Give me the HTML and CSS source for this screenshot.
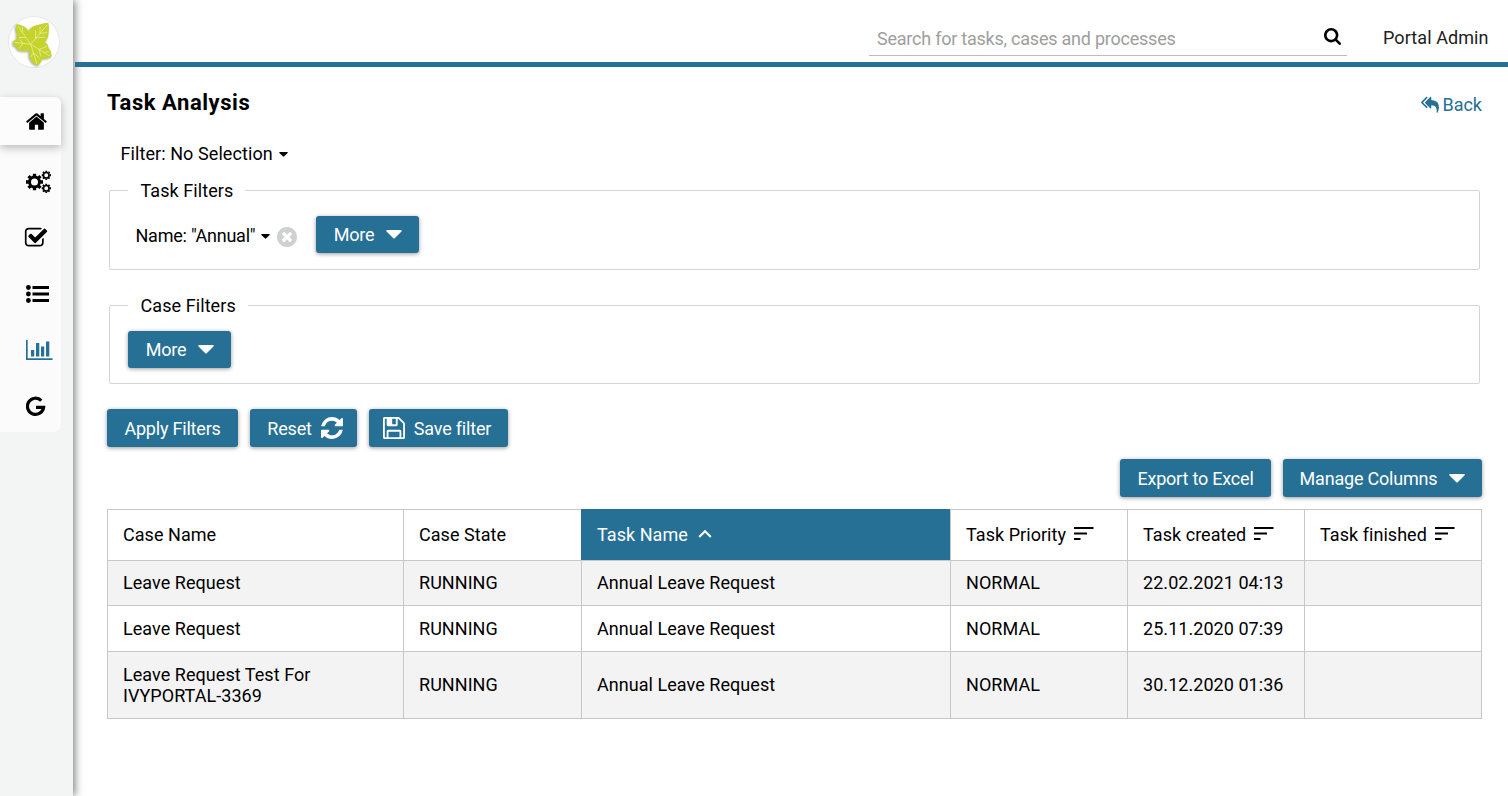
FILE: index.html
```html
<!DOCTYPE html>
<html lang="en">
<head>
<meta charset="utf-8">
<title>Task Analysis</title>
<link rel="stylesheet" href="styles.css">
</head>
<body>
<svg class="defs" width="0" height="0">
  <symbol id="caret" viewBox="0 0 16 9"><path d="M1.2 0h13.6q1 0 1 .8 0 .4-.4.8L8.7 8.2q-.7.6-1.4 0L.6 1.6Q.2 1.200.2.8.2 0 1.200 0z"/></symbol>
  <symbol id="sort" viewBox="0 0 20 14"><path d="M0 0h19.500v2H0zM0 5.500h13v2H0zM0 11h6.500v2H0z"/></symbol>
  <symbol id="gear" viewBox="-8 -8 16 16"><circle r="4.700" fill="none" stroke="currentColor" stroke-width="2.800"/><path stroke="currentColor" stroke-width="3.100" d="M0-8v2.500M0 5.500V8M-8 0h2.500M5.500 0H8M-5.600-5.600l1.700 1.700M5.600 5.600L3.900 3.900M-5.600 5.600l1.700-1.700M5.600-5.600L3.900-3.900"/></symbol>
</svg>
<aside class="sidebar">
  <div class="logo">
    <svg viewBox="0 0 52 52" width="52" height="52">
      <circle cx="26" cy="26" r="25.500" fill="#fff" stroke="#e6e8e8"/>
      <path class="leaf" fill="#c5d42d" d="M20.500 16Q22 11 28 9.500 33 8 40.300 6.800 41.500 11 40.700 16 40.500 22 37 26.500 40 27.500 40.700 32 44 36 43.500 41 38 43.500 34 42.500 33.500 47 29.500 49.500 24.500 48 22.500 43.500 20.500 41 21.500 34.500 18 35.500 14 35 9.500 35 8.500 31 5 30 5 26.500 5.500 24.500 9.500 22.500 8 20 9 17 7 13 8.500 8 13 8.500 16 10.500 20 12.500 20.500 16z"/>
      <g fill="none" stroke="#eaf0a8" stroke-width=".7">
        <path d="M22.700 28.300L39 9M27.500 22.500v-8M32 17.500V11M28 22l9-1M32 17.500l7-1M22.700 28.300L10 10M18 21.500h-7M14.500 17V11M22.700 28.300L7 26.500M15 27.500l-4 5M15 27.500l-3-4M22.700 28.300L42 40M31 33.500l8-3M31 33.500l2 7M36 36.500l5-1M22.700 28.300L29 48M25.500 37l-3 4M25.500 37l6 5"/>
      </g>
    </svg>
  </div>
  <nav class="menu">
    <a class="item active"><svg width="23" height="23" viewBox="0 0 1792 1792"><path d="M1472 992v480q0 26-19 45t-45 19h-384v-384h-256v384h-384q-26 0-45-19t-19-45v-480q0-1 .5-3t.5-3l575-474 575 474q1 2 1 6zm223-69l-62 74q-8 9-21 11h-3q-13 0-21-7l-692-577-692 577q-12 8-24 7-13-2-21-11l-62-74q-8-10-7-23.500t11-21.500l719-599q32-26 76-26t76 26l244 204v-195q0-14 9-23t23-9h192q14 0 23 9t9 23v408l219 182q10 8 11 21.500t-7 23.500z"/></svg></a>
    <a class="item"><svg width="26" height="24" viewBox="0 0 26 24"><use href="#gear" x="0" y="3.500" width="17" height="17"/><use href="#gear" x="15.500" y=".5" width="9.500" height="9.500"/><use href="#gear" x="15.500" y="13.500" width="9.500" height="9.500"/></svg></a>
    <a class="item"><svg width="24" height="24" viewBox="0 0 1792 1792"><path d="M1472 930v318q0 119-84.500 203.500t-203.500 84.500h-832q-119 0-203.500-84.500t-84.500-203.500v-832q0-119 84.500-203.500t203.500-84.500h832q63 0 117 25 15 7 18 23 3 17-9 29l-49 49q-10 10-23 10-3 0-9-2-23-6-45-6h-832q-66 0-113 47t-47 113v832q0 66 47 113t113 47h832q66 0 113-47t47-113v-254q0-13 9-22l64-64q10-10 23-10 6 0 12 3 20 8 20 29zm231-489l-814 814q-24 24-57 24t-57-24l-430-430q-24-24-24-57t24-57l110-110q24-24 57-24t57 24l263 263 647-647q24-24 57-24t57 24l110 110q24 24 24 57t-24 57z"/></svg></a>
    <a class="item"><svg width="24" height="24" viewBox="0 0 24 24"><circle cx="2.400" cy="5.500" r="2.400"/><circle cx="2.400" cy="12" r="2.400"/><circle cx="2.400" cy="18.500" r="2.400"/><path d="M6.500 4H23v3H6.500zM6.500 10.500H23v3H6.500zM6.500 17H23v3H6.500z"/></svg></a>
    <a class="item current"><svg width="27" height="24" viewBox="0 0 27 24"><path d="M0 2h1.700v18.300H26.500V22H0zM5 12h3.200v6.500H5zM10 5h3.300v13.500H10zM15 8.500h3.200v10H15zM20 3.500h3.300v15H20z"/></svg></a>
    <a class="item"><svg width="24" height="24" viewBox="0 0 24 24"><path fill="none" stroke="currentColor" stroke-width="3.200" d="M15.300 6.600A8.100 8.100 0 1 0 17.600 13.300H10"/></svg></a>
  </nav>
</aside>
<div class="page">
  <header class="topbar">
    <div class="search"><span>Search for tasks, cases and processes</span>
      <svg width="17" height="17" viewBox="64 128 1664 1664"><path d="M1216 832q0-185-131.500-316.500t-316.500-131.500-316.500 131.500-131.500 316.500 131.500 316.500 316.500 131.500 316.500-131.500 131.500-316.500zm512 832q0 52-38 90t-90 38q-54 0-90-38l-343-342q-179 124-399 124-143 0-273.500-55.500t-225-150-150-225-55.500-273.500 55.500-273.500 150-225 225-150 273.500-55.500 273.500 55.500 225 150 150 225 55.500 273.500q0 220-124 399l343 343q37 37 37 90z"/></svg>
    </div>
    <span class="user">Portal Admin</span>
  </header>
  <main class="content">
    <div class="heading">
      <h1>Task Analysis</h1>
      <a class="back"><svg width="18" height="18" viewBox="0 0 1792 1792"><path d="M640 1082v70q0 42-39 59-13 5-25 5-27 0-45-19l-512-512q-19-19-19-45t19-45l512-512q29-31 70-14 39 17 39 59v69l-397 398q-19 19-19 45t19 45zm1152 58q0 58-17 133.500t-38.500 138-48 125-40.500 90.500l-20 40q-8 17-28 17-6 0-9-1-25-8-23-34 43-400-106-565-64-71-170.500-110.500t-267.500-52.500v251q0 42-39 59-13 5-25 5-27 0-45-19l-512-512q-19-19-19-45t19-45l512-512q29-31 70-14 39 17 39 59v262q411 28 599 221 169 173 169 509z"/></svg>Back</a>
    </div>
    <div class="saved">Filter: No Selection<svg class="small-caret"><use href="#caret"/></svg></div>
    <section class="group task-group">
      <h2>Task Filters</h2>
      <div class="filters">
        <span class="name">Name: "Annual"<svg class="small-caret"><use href="#caret"/></svg></span>
        <svg class="remove" viewBox="128 128 1536 1536"><path d="M1277 1122q0-26-19-45l-181-181 181-181q19-19 19-45 0-27-19-46l-90-90q-19-19-46-19-26 0-45 19l-181 181-181-181q-19-19-45-19-27 0-46 19l-90 90q-19 19-19 46 0 26 19 45l181 181-181 181q-19 19-19 45 0 27 19 46l90 90q19 19 46 19 26 0 45-19l181-181 181 181q19 19 45 19 27 0 46-19l90-90q19-19 19-46zm387-226q0 209-103 385.500t-279.500 279.500-385.500 103-385.500-103-279.500-279.500-103-385.500 103-385.500 279.500-279.500 385.500-103 385.500 103 279.500 279.500 103 385.500z"/></svg>
        <button class="btn more">More<svg class="caret"><use href="#caret"/></svg></button>
      </div>
    </section>
    <section class="group case-group">
      <h2>Case Filters</h2>
      <div class="filters"><button class="btn more">More<svg class="caret"><use href="#caret"/></svg></button></div>
    </section>
    <div class="actions">
      <button class="btn apply">Apply Filters</button>
      <button class="btn reset">Reset<svg width="22" height="22" viewBox="128 128 1536 1536"><path d="M1639 1056q0 5-1 7-64 268-268 434.500t-478 166.500q-146 0-282.500-55t-243.500-157l-129 129q-19 19-45 19t-45-19-19-45v-448q0-26 19-45t45-19h448q26 0 45 19t19 45-19 45l-137 137q71 66 161 102t187 36q134 0 250-65t186-179q11-17 53-117 8-23 30-23h192q13 0 22.500 9.500t9.500 22.500zm25-800v448q0 26-19 45t-45 19h-448q-26 0-45-19t-19-45 19-45l138-138q-148-137-349-137-134 0-250 65t-186 179q-11 17-53 117-8 23-30 23h-199q-13 0-22.500-9.500t-9.500-22.500v-7q65-268 270-434.500t480-166.500q146 0 284 55.500t245 156.500l130-129q19-19 45-19t45 19 19 45z"/></svg></button>
      <button class="btn save"><svg width="22" height="22" viewBox="128 128 1536 1536"><path d="M512 1536h768v-384h-768v384zm896 0h128v-896q0-14-10-38.500t-20-34.500l-281-281q-10-10-34-20t-39-10v416q0 40-28 68t-68 28h-576q-40 0-68-28t-28-68v-416h-128v1280h128v-416q0-40 28-68t68-28h832q40 0 68 28t28 68v416zm-384-928v-320q0-13-9.500-22.500t-22.500-9.500h-192q-13 0-22.500 9.500t-9.500 22.500v320q0 13 9.500 22.500t22.500 9.500h192q13 0 22.500-9.500t9.500-22.500zm640 32v928q0 40-28 68t-68 28h-1344q-40 0-68-28t-28-68v-1344q0-40 28-68t68-28h928q40 0 88 20t76 48l280 280q28 28 48 76t20 88z"/></svg>Save filter</button>
    </div>
    <div class="actions right">
      <button class="btn export">Export to Excel</button>
      <button class="btn manage">Manage Columns<svg class="caret"><use href="#caret"/></svg></button>
    </div>
    <table class="results">
      <colgroup><col class="c1"><col class="c2"><col class="c3"><col class="c4"><col class="c4"><col class="c4"></colgroup>
      <thead><tr>
        <th>Case Name</th><th class="before-sorted">Case State</th>
        <th class="sorted">Task Name<svg class="chevron" width="14" height="10" viewBox="0 0 14 10"><path fill="none" stroke="#fff" stroke-width="2.200" d="M1.200 8L7 2.200 12.800 8"/></svg></th>
        <th>Task Priority<svg class="sort"><use href="#sort"/></svg></th>
        <th>Task created<svg class="sort"><use href="#sort"/></svg></th>
        <th>Task finished<svg class="sort"><use href="#sort"/></svg></th>
      </tr></thead>
      <tbody>
        <tr class="r1"><td>Leave Request</td><td>RUNNING</td><td>Annual Leave Request</td><td>NORMAL</td><td>22.02.2021 04:13</td><td></td></tr>
        <tr class="r2"><td>Leave Request</td><td>RUNNING</td><td>Annual Leave Request</td><td>NORMAL</td><td>25.11.2020 07:39</td><td></td></tr>
        <tr class="r3"><td>Leave Request Test For IVYPORTAL-3369</td><td>RUNNING</td><td>Annual Leave Request</td><td>NORMAL</td><td>30.12.2020 01:36</td><td></td></tr>
      </tbody>
    </table>
  </main>
</div>
</body>
</html>
```
FILE: styles.css
```css
* { box-sizing: border-box; }
body { margin: 0; width: 1508px; height: 796px; display: flex; overflow: hidden; background: #fff; color: #000; font: 18px/21px Roboto, "Liberation Sans", sans-serif; white-space: nowrap; }
svg { flex: none; fill: currentColor; display: block; }
.defs { display: none; }
.sidebar { flex: none; width: 73px; height: 796px; background: #f3f5f5; box-shadow: 2px 0 8px rgba(0,0,0,.5); }
.logo { padding: 16px 0 0 8px; height: 97px; }
.logo .leaf { filter: drop-shadow(-.5px 1.5px 1px rgba(60,70,40,.45)); }
.menu { width: 61px; height: 335px; background: #fbfbfb; border-radius: 0 8px 8px 0; }
.item { display: flex; align-items: center; height: 56px; padding-left: 26px; }
.item.active { height: 48px; margin-bottom: 9px; padding: 1px 0 0 25px; border-radius: 0 6px 0 0; background: #fcfcfc; box-shadow: 0 3px 8px rgba(0,0,0,.25); }
.item:nth-child(2) { padding-bottom: 1px; }
.item:nth-child(3) { padding-left: 24px; }
.item.current { color: #267096; }
.page { flex: 1; padding-left: 2px; }
.topbar { position: relative; display: flex; align-items: flex-start; height: 67px; padding-left: 794px; border-bottom: 5px solid #267096; }
.search { display: flex; justify-content: space-between; align-items: center; width: 478px; height: 34px; margin-top: 22px; padding: 0 6px 3px 8px; border-bottom: 1px solid #bdbdbd; color: #9e9e9e; }
.search span { margin-top: 2px; letter-spacing: -.23px; }
.search svg { color: #000; margin-top: -1px; }
.user { margin: 27px 0 0 36px; color: #212121; letter-spacing: .08px; }
.content { padding: 24px 26px 0 32px; }
.heading { display: flex; justify-content: space-between; height: 52px; }
h1 { margin: 0; font-size: 22px; line-height: 24px; font-weight: 700; letter-spacing: .55px; }
.back { display: flex; align-items: center; gap: 3px; height: 21px; margin-top: 3px; color: #267096; }
.saved { display: flex; align-items: center; height: 21px; padding-left: 13.500px; gap: 6px; letter-spacing: .08px; }
.small-caret { width: 9px; height: 5px; margin-top: 2px; }
.group { width: 1371px; margin-left: 2px; border: 1px solid #d5d5d5; border-radius: 2px; }
.task-group { height: 80px; margin-top: 26px; }
.case-group { height: 79px; margin-top: 35px; }
.group h2 { width: max-content; margin: -11px 0 0 18px; padding: 0 12px 0 12.500px; background: #fff; font-size: 18px; font-weight: 400; line-height: 21px; letter-spacing: .08px; }
.filters { display: flex; align-items: center; height: 37px; margin-top: 15px; padding-left: 18px; }
.name { display: flex; align-items: center; gap: 6px; width: 143px; padding: 2px 0 0 7.500px; letter-spacing: -.22px; }
.remove { width: 20px; height: 20px; margin: 4px 19px 0 6px; color: #cfd0d0; }
.btn { display: flex; align-items: center; height: 38px; padding: 0; border: 0; border-radius: 3px; background: #267096; color: #fff; font: 400 18px/21px Roboto, "Liberation Sans", sans-serif; letter-spacing: -.2px; justify-content: center; box-shadow: 0 1px 4px rgba(0,0,0,.4); }
.caret { width: 16px; height: 9px; margin-left: 12px; }
.more { width: 103px; height: 37px; padding-left: 1px; }
.actions { display: flex; gap: 12px; margin-top: 25px; }
.actions.right { justify-content: flex-end; margin-top: 12px; }
.apply { width: 131px; }
.reset { width: 107px; gap: 9px; padding-left: 3px; }
.save { width: 139px; gap: 9px; padding-right: 3px; }
.export { width: 151px; }
.manage { width: 199px; }
.results { width: 1375px; margin-top: 12px; border-collapse: collapse; table-layout: fixed; }
.c1 { width: 296px; }
.c2 { width: 178px; }
.c3 { width: 369px; }
.c4 { width: 177px; }
th, td { padding: 0 15px; border: 1px solid #c8c8c8; text-align: left; font-weight: 400; letter-spacing: .05px; vertical-align: middle; }
th { height: 51px; padding-bottom: 2px; }
th svg { display: inline-block; margin-left: 10px; }
.sort { width: 20px; height: 14px; margin-left: 8px; }
.chevron { vertical-align: 2px; }
.before-sorted { border-right-color: #267096; }
.sorted { background: #267096; background-clip: padding-box; border-top-color: #267096; color: #fff; }
.r1, .r3 { background: #f3f3f3; }
.r1 { height: 45px; }
.r2 { height: 46px; }
.r3 { height: 67px; }
.r1 td, .r3 td { padding-bottom: 2px; }
.r3 td:first-child { padding-bottom: 0; }
td:first-child { white-space: normal; padding-right: 60px; }
```
